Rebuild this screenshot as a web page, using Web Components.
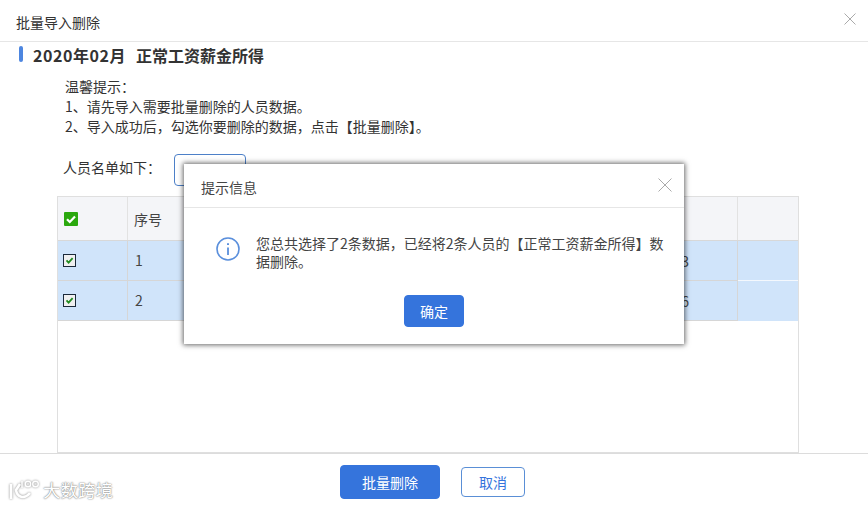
<!DOCTYPE html>
<html lang="zh">
<head>
<meta charset="utf-8">
<title>批量导入删除</title>
<style>
  html, body { margin: 0; height: 507px; overflow: hidden; background: #fff; }
  body { font: 14px "Noto Sans CJK SC", "Liberation Sans", sans-serif; color: #333; }
</style>
</head>
<body>
<import-page>
  <confirm-dialog slot="overlay" title-text="提示信息">您总共选择了2条数据，已经将2条人员的【正常工资薪金所得】数据删除。</confirm-dialog>
  <brand-mark slot="overlay"></brand-mark>
</import-page>

<script>
class CloseX extends HTMLElement {
  connectedCallback() {
    const size = this.getAttribute('size') || 12;
    this.attachShadow({ mode: 'open' }).innerHTML = `
      <style>:host { display: block; line-height: 0; }</style>
      <svg width="${size}" height="${size}" viewBox="0 0 ${size} ${size}" fill="none" stroke="#aaa" stroke-width="1">
        <path d="M0.5 0.5L${size - 0.5} ${size - 0.5}M${size - 0.5} 0.5L0.5 ${size - 0.5}"/>
      </svg>`;
  }
}

class TickBox extends HTMLElement {
  connectedCallback() {
    const head = this.hasAttribute('head');
    this.attachShadow({ mode: 'open' }).innerHTML = head ? `
      <style>:host { display: block; line-height: 0; }</style>
      <svg width="14" height="14" viewBox="0 0 14 14">
        <rect width="14" height="14" rx="1" fill="#2aa80e"/>
        <path d="M3 7.2L5.8 10L11 4.6" fill="none" stroke="#fff" stroke-width="2.2"/>
      </svg>` : `
      <style>:host { display: block; line-height: 0; }</style>
      <svg width="13" height="13" viewBox="0 0 13 13">
        <rect x=".5" y=".5" width="12" height="12" fill="#f0f0f0" stroke="#1c2a3a"/>
        <path d="M3.5 6.4L5.6 8.6L9.6 4.2" fill="none" stroke="#1f8a1f" stroke-width="1.8"/>
      </svg>`;
  }
}

class InfoIcon extends HTMLElement {
  connectedCallback() {
    this.attachShadow({ mode: 'open' }).innerHTML = `
      <style>:host { display: block; line-height: 0; }</style>
      <svg width="24" height="24" viewBox="0 0 24 24" fill="none" stroke="#5a8fdc" stroke-width="1.6">
        <circle cx="12" cy="12" r="11"/>
        <path d="M12 10.5V18" stroke-width="1.8"/>
        <path d="M12 6.2V8" stroke-width="2"/>
      </svg>`;
  }
}

class AppButton extends HTMLElement {
  connectedCallback() {
    const ghost = this.hasAttribute('ghost');
    this.attachShadow({ mode: 'open' }).innerHTML = `
      <style>
        :host {
          display: flex;
          align-items: center;
          justify-content: center;
          box-sizing: border-box;
          width: ${this.getAttribute('w')}px;
          height: ${this.getAttribute('h')}px;
          border-radius: 4px;
          font-size: 14px;
          border: 1px solid ${ghost ? '#5a8fd6' : '#3574dc'};
          background: ${ghost ? '#fff' : '#3574dc'};
          color: ${ghost ? '#3574dc' : '#fff'};
        }
      </style>
      <slot></slot>`;
  }
}

class DataTable extends HTMLElement {
  connectedCallback() {
    const rows = [['1', '3'], ['2', '6']];
    const row = ([no, tail], i) => `
      <div class="row body ${i === rows.length - 1 ? 'last' : ''}">
        <div class="c first"><tick-box></tick-box></div>
        <div class="c no">${no}</div>
        <div class="c tail">${tail}</div>
        <div class="c end"></div>
      </div>`;
    this.attachShadow({ mode: 'open' }).innerHTML = `
      <style>
        :host {
          display: block;
          flex: none;
          box-sizing: border-box;
          height: 257px;
          margin: 10px 69px 0 57px;
          border: 1px solid #dfdfdf;
          color: #444;
        }
        .row { display: grid; grid-template-columns: 70px 70px 1fr 60px; }
        .head { height: 44px; background: #f4f5f8; border-bottom: 1px solid #d8d8d8; box-sizing: border-box; }
        .body { height: 40px; background: #d0e4fa; box-sizing: border-box; }
        .c { display: flex; align-items: center; box-sizing: border-box; border-right: 1px solid #d6d6d6; border-bottom: 1px solid #d6d6d6; }
        .head .c { border-bottom: 0; border-right-color: #e2e2e2; }
        .head .first { padding: 1px 0 0 6px; }
        .first { padding-left: 5px; }
        .no { padding: 0 0 1px 7px; }
        .head .no { padding: 0 0 0 6px; }
        .tail { justify-content: flex-end; padding-right: 48px; }
        .end { border-right: 0; border-bottom: 1px solid #f4f8fd; }
        .head .end { border-bottom: 0; }
        .last .end { border-bottom: 0; }
      </style>
      <div class="row head">
        <div class="c first"><tick-box head></tick-box></div>
        <div class="c no">序号</div>
        <div class="c"></div>
        <div class="c end"></div>
      </div>
      ${rows.map(row).join('')}`;
  }
}

class ConfirmDialog extends HTMLElement {
  connectedCallback() {
    this.attachShadow({ mode: 'open' }).innerHTML = `
      <style>
        :host {
          position: absolute;
          left: 184px;
          top: 164px;
          width: 500px;
          height: 180px;
          display: flex;
          flex-direction: column;
          background: #fff;
          box-shadow: 0 0 5px 1px rgba(0,0,0,.6);
          color: #444;
        }
        header {
          height: 44px;
          flex: none;
          box-sizing: border-box;
          border-bottom: 1px solid #e6e6e6;
          display: flex;
          align-items: center;
          justify-content: space-between;
          padding: 2px 12px 0 17px;
        }
        header close-x { margin-top: -4px; }
        .msg { display: flex; flex: none; gap: 16px; padding: 26px 0 0 32px; font-size: 14px; height: 44px; }
        .msg div { width: 410px; line-height: 18px; }
        info-icon { flex: none; margin-top: 3px; }
        .actions { display: flex; justify-content: center; margin-top: 17px; }
      </style>
      <header><span>${this.getAttribute('title-text')}</span><close-x size="14"></close-x></header>
      <div class="msg"><info-icon></info-icon><div><slot></slot></div></div>
      <div class="actions"><app-button w="60" h="32">确定</app-button></div>`;
  }
}

class BrandMark extends HTMLElement {
  connectedCallback() {
    this.attachShadow({ mode: 'open' }).innerHTML = `
      <style>
        :host {
          position: absolute;
          left: 8px;
          top: 479px;
          display: flex;
          align-items: center;
          gap: 3px;
          color: #fff;
          font-size: 17.5px;
          line-height: 22px;
          text-shadow: 0 0 2px #888, 0 0 1px #777;
        }
        svg { display: block; filter: drop-shadow(0 0 1px #888); }
      </style>
      <svg width="32" height="22" viewBox="0 0 32 22" fill="none" stroke="#fff" stroke-width="2.6">
        <path d="M3 5V20"/>
        <path d="M12 5L8 11C9 18 16 21 22 14"/>
        <path d="M14 2V9" stroke-width="1.4"/>
        <circle cx="20" cy="5" r="2.8" stroke-width="1.4"/>
        <circle cx="27.5" cy="5" r="2.8" stroke-width="1.4"/>
      </svg>
      <span>大数跨境</span>`;
  }
}

class ImportPage extends HTMLElement {
  connectedCallback() {
    this.attachShadow({ mode: 'open' }).innerHTML = `
      <style>
        :host {
          display: flex;
          flex-direction: column;
          position: relative;
          height: 507px;
          color: #333;
        }
        .top {
          height: 42px;
          flex: none;
          box-sizing: border-box;
          border-bottom: 1px solid #e6e6e6;
          display: flex;
          align-items: center;
          justify-content: space-between;
          padding: 2px 12px 0 16px;
        }
        .top close-x { margin-top: -6px; }
        .heading { display: flex; flex: none; gap: 10px; height: 30px; padding-left: 19px; font-size: 16px; font-weight: 700; line-height: 27px; }
        .heading i { width: 4px; height: 16px; margin-top: 4px; border-radius: 2px; background: #4d86e0; }
        .date { letter-spacing: .55px; margin-right: 10px; }
        .tips { flex: none; margin: 4px 0 0 65px; line-height: 20px; }
        .list { display: flex; flex: none; height: 32px; margin: 18px 0 0 63px; gap: 13px; }
        .list span { line-height: 26px; }
        .pick { width: 72px; height: 32px; box-sizing: border-box; border: 1px solid #4d80c8; border-radius: 4px; }
        .foot {
          display: flex;
          flex: none;
          justify-content: center;
          align-items: center;
          gap: 21px;
          box-sizing: border-box;
          height: 54px;
          padding: 3px 3px 0 0;
          border-top: 1px solid #dcdcdc;
        }
      </style>
      <div class="top"><span>批量导入删除</span><close-x></close-x></div>
      <div class="heading"><i></i><span><span class="date">2020年02月</span>正常工资薪金所得</span></div>
      <div class="tips">温馨提示：<br>1、请先导入需要批量删除的人员数据。<br>2、导入成功后，勾选你要删除的数据，点击【批量删除】。</div>
      <div class="list"><span>人员名单如下：</span><div class="pick"></div></div>
      <data-table></data-table>
      <div class="foot">
        <app-button w="100" h="34">批量删除</app-button>
        <app-button ghost w="64" h="30">取消</app-button>
      </div>
      <slot name="overlay"></slot>`;
  }
}

customElements.define('close-x', CloseX);
customElements.define('tick-box', TickBox);
customElements.define('info-icon', InfoIcon);
customElements.define('app-button', AppButton);
customElements.define('data-table', DataTable);
customElements.define('confirm-dialog', ConfirmDialog);
customElements.define('brand-mark', BrandMark);
customElements.define('import-page', ImportPage);
</script>
</body>
</html>
